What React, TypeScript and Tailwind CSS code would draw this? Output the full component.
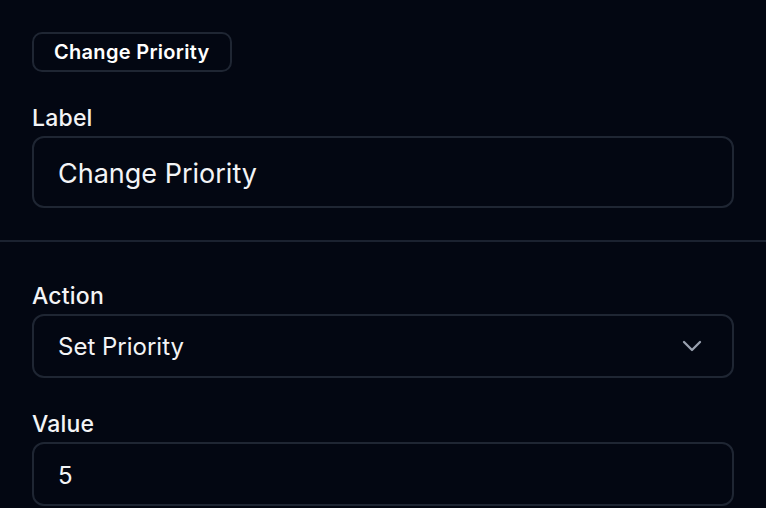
import { ChevronDown } from "lucide-react";

const fieldLabel = "block text-[23px] leading-[28px] font-medium tracking-[0.2px] text-gray-100";

const App = () => {
  return (
    <div className="min-h-screen w-full bg-[#030712] font-['Inter',sans-serif] text-gray-100">
      {/* Node title + label */}
      <section className="border-b-2 border-[#1b2230] px-8 pt-8 pb-8">
        <div className="flex">
          <span className="flex h-10 items-center rounded-[10px] border-2 border-[#1f2633] px-[20px] text-[20px] font-semibold tracking-[0.3px] text-white">
            Change Priority
          </span>
        </div>
        <label className={`${fieldLabel} mt-8`}>Label</label>
        <input
          defaultValue="Change Priority"
          className="mt-1 h-[72px] w-full rounded-xl border-2 border-[#1f2633] bg-transparent px-6 pt-[2px] text-[27px] text-gray-100 outline-none"
        />
      </section>

      {/* Action settings */}
      <section className="px-8 pt-10">
        <label className={fieldLabel}>Action</label>
        <button className="mt-1 flex h-[64px] w-full items-center justify-between rounded-xl border-2 border-[#1f2633] pr-6 pl-6 text-[24px] text-gray-100">
          <span className="pt-[2px]">Set Priority</span>
          <ChevronDown size={32} strokeWidth={1.75} className="text-gray-400" />
        </button>

        <label className={`${fieldLabel} mt-8`}>Value</label>
        <input
          defaultValue="5"
          className="mt-1 h-[64px] w-full rounded-xl border-2 border-[#1f2633] bg-transparent px-6 pt-[2px] text-[24px] text-gray-100 outline-none"
        />
      </section>
    </div>
  );
};

export default App;
